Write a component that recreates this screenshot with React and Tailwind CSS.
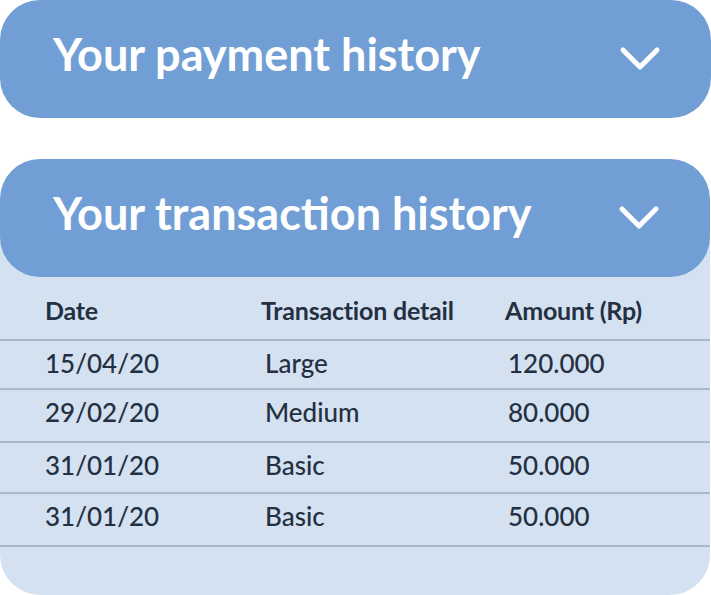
import React from 'react';

const rows = [
  { date: '15/04/20', detail: 'Large', amount: '120.000', h: 'h-[49px]' },
  { date: '29/02/20', detail: 'Medium', amount: '80.000', h: 'h-[53px]' },
  { date: '31/01/20', detail: 'Basic', amount: '50.000', h: 'h-[51px]' },
  { date: '31/01/20', detail: 'Basic', amount: '50.000', h: 'h-[53px]' },
];

const Chevron = () => (
  <svg width="44" height="28" viewBox="0 0 44 28" fill="none">
    <path d="M5 6 L22 23 L39 6" stroke="white" strokeWidth="5" strokeLinecap="round" strokeLinejoin="round" />
  </svg>
);

const Header = ({ title, className = '' }) => (
  <div className={`flex items-start justify-between bg-[#719fd5] rounded-[40px] h-[118px] pl-[53px] pr-[49px] ${className}`}>
    <h2 className="pt-[32px] text-[45px] leading-none font-bold text-white">{title}</h2>
    <div className="pt-[44px]">
      <Chevron />
    </div>
  </div>
);

export default function App() {
  return (
    <div className="w-[711px] h-[595px] bg-white font-['Lato',sans-serif]">

      {/* Payment history, collapsed */}
      <Header title="Your payment history" className="h-[117px]" />

      {/* Transaction history, open */}
      <div className="mt-[41px] w-[710px]">
        <Header title="Your transaction history" className="relative z-10" />

        <div className="-mt-[59px] pt-[59px] bg-[#d4e1f1] rounded-b-[40px] h-[377px] text-[#243041]">
          <div className="grid grid-cols-[216px_244px_1fr] pl-[45px] pt-[21px] h-[64px] border-b-2 border-[#a9b8cc] text-[25px] leading-none font-bold tracking-[-0.2px]">
            <span>Date</span>
            <span>Transaction detail</span>
            <span>Amount (Rp)</span>
          </div>

          {rows.map((r, i) => (
            <div
              key={i}
              className={`grid grid-cols-[216px_244px_1fr] pl-[45px] pt-[9px] border-b-2 border-[#a9b8cc] text-[26px] leading-none font-medium ${r.h}`}
            >
              <span>{r.date}</span>
              <span className="pl-[4px]">{r.detail}</span>
              <span className="pl-[3px]">{r.amount}</span>
            </div>
          ))}
        </div>
      </div>

    </div>
  );
}
